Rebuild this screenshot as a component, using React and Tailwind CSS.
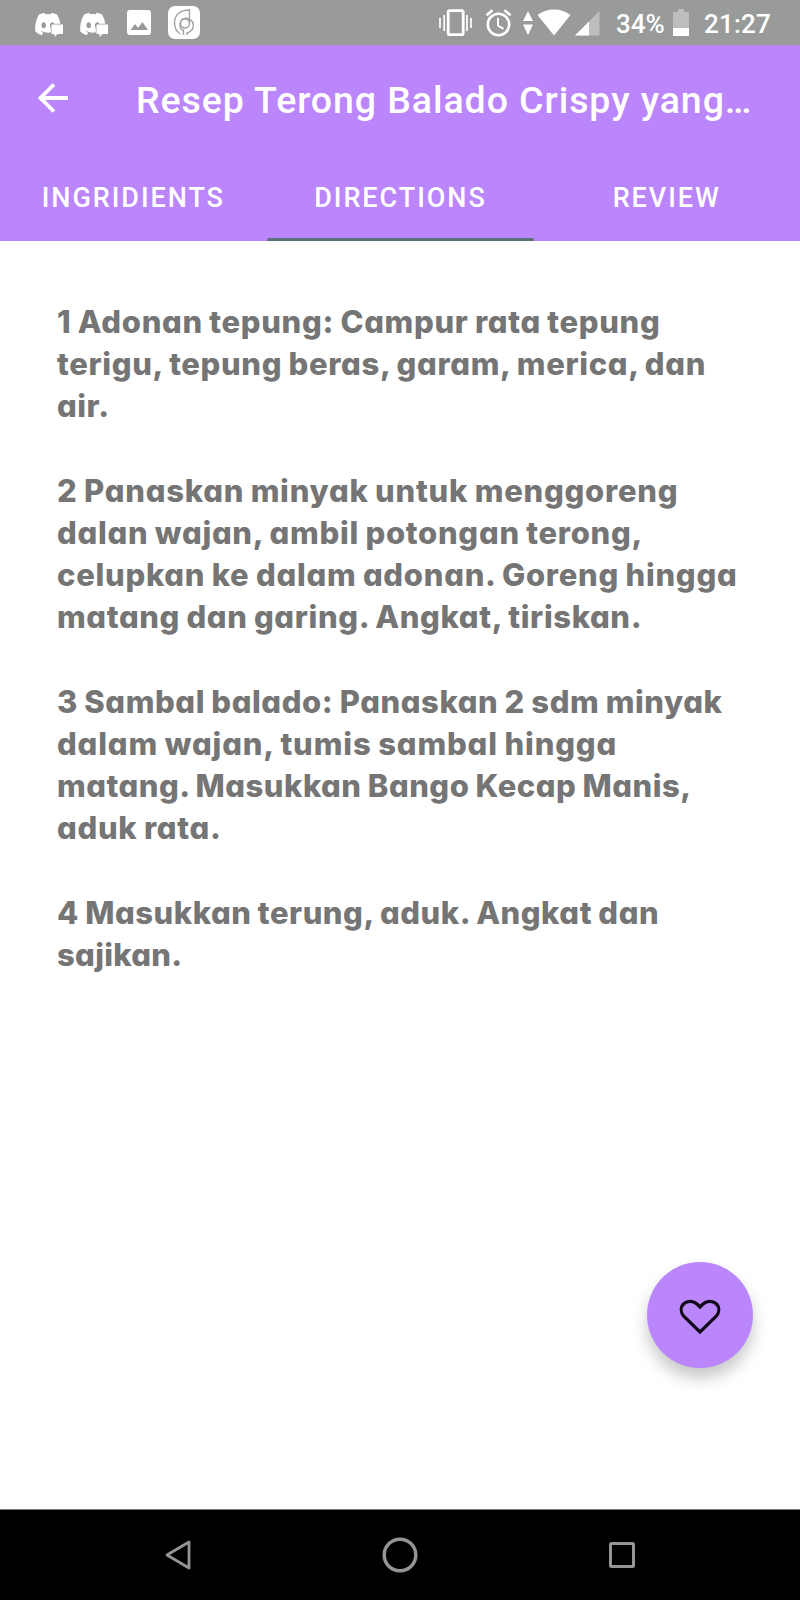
import { FaDiscord } from "react-icons/fa";

function DiscordChat({ className }) {
  return (
    <span className={"relative block h-[26px] w-[29px] shrink-0 " + className}>
      <FaDiscord className="block h-[26px] w-[28px]" preserveAspectRatio="none" />
      <svg className="absolute left-[15px] top-[12px]" width="15" height="14" viewBox="0 0 15 14">
        <path d="M2.500 1.500h11.500v9.500H8.500L5.500 14v-3h-3z" fill="#fff" stroke="#999b9a" strokeWidth="1.5" paintOrder="stroke" />
      </svg>
    </span>
  );
}

function StatusBar() {
  return (
    <div className="flex h-[45px] items-start bg-[#999b9a] text-white">
      <DiscordChat className="ml-[34px] mt-[11px]" />
      <DiscordChat className="ml-[16px] mt-[11px]" />
      <svg className="ml-[19px] mt-[10px] shrink-0" width="24" height="25" viewBox="0 0 24 25">
        <rect width="24" height="25" rx="3" fill="#fff" />
        <path d="M3.500 20l4.500-6 3 3.700 4.500-5.700 5.500 8z" fill="#999b9a" />
      </svg>
      <svg className="ml-[17px] mt-[6px] shrink-0" width="32" height="33" viewBox="0 0 32 33">
        <rect width="32" height="33" rx="7" fill="#fff" />
        <g fill="none" stroke="#a0a2a1" strokeWidth="1.400">
          <path d="M15.500 29v-4.500c-2.500-1-4-3.500-3.500-7C12.500 13 17 11.500 20 12.500c4 1.500 6 5 5 9-.7 2.500-3 4.500-6 5.500V29" />
          <path d="M12.500 28C9 26 6.500 22 6.500 16.500 6.500 9 12 4 21.500 4v13" />
          <circle cx="17" cy="17.500" r="4.500" />
        </g>
      </svg>
      <svg className="ml-[239px] mt-[9px] shrink-0" width="33" height="28" viewBox="0 0 33 28">
        <rect x="9.200" y="1.700" width="15" height="24" rx="1.500" fill="none" stroke="#fff" strokeWidth="2.800" />
        <path d="M1 9v10M5.200 6v16M28 6v16M32 9v10" stroke="#fff" strokeWidth="1.700" />
      </svg>
      <svg className="ml-[13px] mt-[9px] shrink-0" width="27" height="28" viewBox="0 0 27 28">
        <circle cx="13.500" cy="15.500" r="10.700" fill="none" stroke="#fff" strokeWidth="2.600" />
        <path d="M1.500 6.200L7.500 1.300M25.500 6.200L19.500 1.300" stroke="#fff" strokeWidth="2.700" />
        <path d="M13 9v7.500l5.500 3.300" fill="none" stroke="#fff" strokeWidth="2" />
      </svg>
      <svg className="ml-[11px] mt-[11px] shrink-0" width="10" height="24" viewBox="0 0 10 24">
        <path d="M5 0l5 10H0zM5 24L0 13.500h10z" fill="#fff" />
      </svg>
      <svg className="ml-[4px] mt-[9px] shrink-0" width="34" height="27" viewBox="0 0 34 27">
        <path d="M17 26.500L.5 6C5 2.500 10.500.5 17 .5S29 2.500 33.500 6z" fill="#fff" />
      </svg>
      <svg className="ml-[4px] mt-[11px] shrink-0" width="25" height="25" viewBox="0 0 25 25">
        <path d="M0 24.500L24.500 0v24.500z" fill="#bdbebe" />
        <path d="M0 24.500L14 10.500v14z" fill="#fff" />
      </svg>
      <span className="ml-[16px] mt-[9px] w-[50px] whitespace-nowrap text-[26px] leading-[30px] font-medium">34%</span>
      <svg className="ml-[7px] mt-[9px] shrink-0" width="16" height="27" viewBox="0 0 16 27">
        <path d="M5 0h6v3h5v24H0V3h5z" fill="#bdbebe" />
        <path d="M0 19h16v8H0z" fill="#fff" />
      </svg>
      <span className="ml-[15px] mt-[9px] whitespace-nowrap text-[26px] leading-[30px] font-medium tracking-[0.2px]">21:27</span>
    </div>
  );
}

const steps = [
  [
    ["1 Adonan tepung: Campur rata tepung", "tracking-[0.67px]"],
    ["terigu, tepung beras, garam, merica, dan", "tracking-[0.65px]"],
    ["air.", "tracking-[0.5px]"],
  ],
  [
    ["2 Panaskan minyak untuk menggoreng", "tracking-[0.75px]"],
    ["dalan wajan, ambil potongan terong,", "tracking-[0.71px]"],
    ["celupkan ke dalam adonan. Goreng hingga", "tracking-[0.72px]"],
    ["matang dan garing. Angkat, tiriskan.", "tracking-[0.62px]"],
  ],
  [
    ["3 Sambal balado: Panaskan 2 sdm minyak", "tracking-[0.57px]"],
    ["dalam wajan, tumis sambal hingga", "tracking-[0.85px]"],
    ["matang. Masukkan Bango Kecap Manis,", "tracking-[0.49px]"],
    ["aduk rata.", "tracking-[0.71px]"],
  ],
  [
    ["4 Masukkan terung, aduk. Angkat dan", "tracking-[0.54px]"],
    ["sajikan.", "tracking-[0.3px]"],
  ],
];

export default function App() {
  return (
    <div className="flex h-[1600px] w-[800px] flex-col overflow-hidden bg-white font-['Roboto',sans-serif]">
      <StatusBar />
      <header className="flex h-[196px] flex-col bg-[#bb86fc] text-white">
        <div className="flex h-[110px] items-center pl-[38px]">
          <svg className="mb-[4px] shrink-0" width="31" height="30" viewBox="0 0 31 30">
            <path d="M16 1.500L2.500 15 16 28.500M2.500 15H30" fill="none" stroke="#fff" strokeWidth="3.800" />
          </svg>
          <h1 className="ml-[67px] whitespace-nowrap text-[37.500px] leading-[46px] font-medium tracking-[0.920px]">Resep Terong Balado Crispy yang…</h1>
        </div>
        <nav className="grid h-[86px] grid-cols-3 text-center text-[27px] leading-[32px] font-medium tracking-[1.950px]">
          <div className="pt-[27px]">INGRIDIENTS</div>
          <div className="flex flex-col justify-between pt-[27px]">
            <span className="pl-[1px]">DIRECTIONS</span>
            <span className="h-[3px] w-[267px] rounded-t-[2px] bg-[#5b7078]" />
          </div>
          <div className="pt-[27px]">REVIEW</div>
        </nav>
      </header>
      <main className="flex flex-1 flex-col gap-[42.200px] pl-[57px] pt-[60px] font-['Inter',sans-serif] text-[31px] leading-[42.200px] font-[780] text-[#757575] [word-spacing:-1px] [font-feature-settings:'cv11'] [font-variation-settings:'opsz'_20]">
        {steps.map((lines) => (
          <p key={lines[0][0]}>
            {lines.map(([text, tracking]) => (
              <span key={text} className={"block whitespace-nowrap " + tracking}>{text}</span>
            ))}
          </p>
        ))}
      </main>
      <div className="flex h-[247px] justify-end pr-[47px]">
        <button className="flex h-[106px] w-[106px] items-center justify-center rounded-full bg-[#bb86fc] shadow-[0_10px_16px_rgba(0,0,0,0.22)]">
          <svg className="mt-[3px]" width="42" height="36" viewBox="0 0 42 36">
            <path d="M21 33L5 17.500C1.200 13 1.500 8 4.500 5 9 .8 15 2 18 5l3 3 3-3c3-3 9-4.200 13.500 0C40.500 8 40.800 13 37 17.500z" fill="none" stroke="#100818" strokeWidth="3.200" />
          </svg>
        </button>
      </div>
      <footer className="flex h-[91px] items-center justify-between border-t border-[#777] bg-black px-[165px]">
        <svg width="26" height="30" viewBox="0 0 26 30"><path d="M24 2v26L2 15z" fill="none" stroke="#959595" strokeWidth="2.800" strokeLinejoin="round" /></svg>
        <svg width="36" height="36" viewBox="0 0 36 36"><circle cx="18" cy="18" r="15.800" fill="none" stroke="#959595" strokeWidth="3.500" /></svg>
        <svg width="26" height="26" viewBox="0 0 26 26"><rect x="1.500" y="1.500" width="23" height="23" rx="1" fill="none" stroke="#959595" strokeWidth="3" /></svg>
      </footer>
    </div>
  );
}
